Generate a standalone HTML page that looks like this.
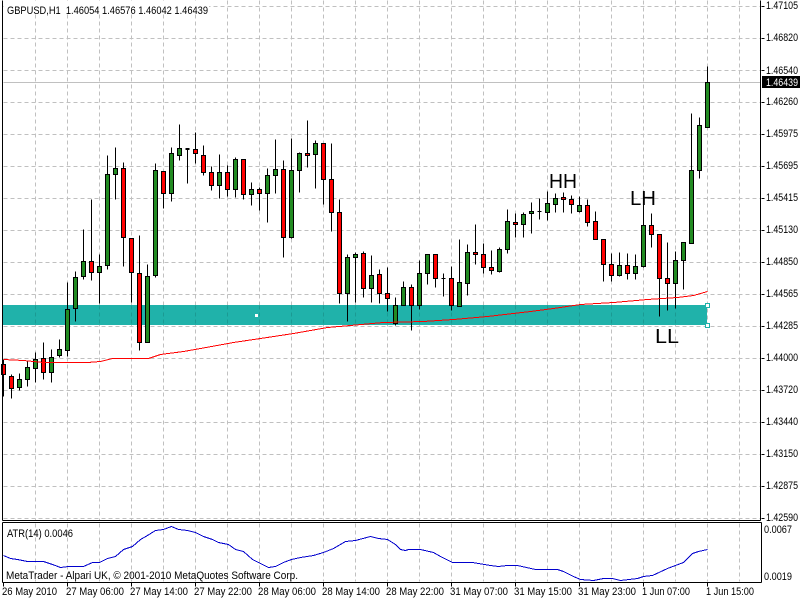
<!DOCTYPE html>
<html>
<head>
<meta charset="utf-8">
<title>GBPUSD,H1</title>
<style>
html,body{margin:0;padding:0;background:#fff;width:800px;height:600px;overflow:hidden}
svg{display:block}
text{font-family:"Liberation Sans",sans-serif;font-size:11px;fill:#000}
.big{font-size:20px}
</style>
</head>
<body>
<svg width="800" height="600" viewBox="0 0 800 600" xmlns="http://www.w3.org/2000/svg">
<rect width="800" height="600" fill="#fff"/>
<g transform="translate(.5 .5)" shape-rendering="crispEdges" fill="none">
<!-- grid -->
<path stroke="#c0c0c0" stroke-dasharray="4 3" d="M3 6H760M3 38H760M3 70H760M3 102H760M3 134H760M3 166H760M3 198H760M3 230H760M3 262H760M3 294H760M3 326H760M3 358H760M3 390H760M3 422H760M3 454H760M3 486H760M3 518H760"/>
<path stroke="#c0c0c0" stroke-dasharray="4 3" d="M35 0V520M67 0V520M99 0V520M131 0V520M163 0V520M195 0V520M227 0V520M259 0V520M291 0V520M323 0V520M355 0V520M387 0V520M419 0V520M451 0V520M483 0V520M515 0V520M547 0V520M579 0V520M611 0V520M643 0V520M675 0V520M707 0V520"/>
<path stroke="#c0c0c0" stroke-dasharray="4 3" d="M739 0V520"/>
<path stroke="#c0c0c0" stroke-dasharray="4 3" d="M35 523V581M67 523V581M99 523V581M131 523V581M163 523V581M195 523V581M227 523V581M259 523V581M291 523V581M323 523V581M355 523V581M387 523V581M419 523V581M451 523V581M483 523V581M515 523V581M547 523V581M579 523V581M611 523V581M643 523V581M675 523V581M707 523V581M739 523V581"/>
</g>
<!-- teal rectangle -->
<rect x="3" y="305" width="704" height="20" fill="#20b2aa"/>
<g transform="translate(.5 .5)" shape-rendering="crispEdges" fill="none">
<path stroke="#1b9a93" stroke-dasharray="4 3" d="M35 305V324M67 305V324M99 305V324M131 305V324M163 305V324M195 305V324M227 305V324M259 305V324M291 305V324M323 305V324M355 305V324M387 305V324M419 305V324M451 305V324M483 305V324M515 305V324M547 305V324M579 305V324M611 305V324M643 305V324M675 305V324"/>
<!-- last price line -->
<path stroke="#c0c0c0" d="M3 82H760"/>
<!-- wicks -->
<path stroke="#000" d="M3 359V396M11 374V398M19 373V390M27 360V386M35 352V382M43 342V379M51 349V382M59 339V357M67 282V356M75 271V321M83 229V279M91 199V280M99 254V303M107 155V269M115 147V199M123 162V266M131 238V302M139 235V350M147 264V342M155 163V277M163 171V208M171 147V201M179 124V160M187 149V183M195 132V163M203 145V175M211 166V190M219 154V198M227 165V196M235 157V197M243 159V199M251 182V205M259 187V210M267 168V222M275 139V193M283 160V257M291 138V238M299 152V192M307 120V167M315 140V188M323 143V204M331 143V231M339 199V303M347 254V321M355 252V302M363 251V297M371 255V302M379 269V303M387 267V311M395 297V325M403 281V305M411 284V330M419 260V309M427 254V284M435 254V287M443 273V296M451 266V310M459 239V306M467 244V295M475 224V264M483 243V273M491 250V274M499 247V272M507 209V253M515 213V237M523 212V237M531 202V233M539 198V219M547 191V220M555 193V212M563 192V212M571 195V213M579 196V212M587 199V226M595 211V239M603 239V281M611 253V281M619 252V276M627 253V279M635 254V279M643 203V267M651 213V247M659 234V316M667 242V310M675 251V308M683 242V289M691 113V243M699 117V178M707 66V127"/>
<!-- dojis -->
<path stroke="#000" d="M185 149h4M185 148h4M441 278h4M537 211h4"/>
<!-- green bodies -->
<path stroke="#000" fill="#228b22" d="M17 379h4V387h-4zM25 367h4V379h-4zM33 359h4V368h-4zM49 357h4V372h-4zM57 349h4V355h-4zM65 309h4V350h-4zM73 277h4V308h-4zM81 261h4V276h-4zM97 266h4V272h-4zM105 174h4V265h-4zM113 168h4V174h-4zM145 276h4V342h-4zM153 170h4V275h-4zM169 153h4V193h-4zM177 148h4V155h-4zM217 172h4V185h-4zM233 159h4V189h-4zM249 189h4V194h-4zM265 175h4V193h-4zM273 169h4V175h-4zM289 170h4V237h-4zM297 153h4V170h-4zM313 143h4V154h-4zM345 257h4V293h-4zM353 254h4V257h-4zM369 275h4V288h-4zM393 305h4V323h-4zM401 287h4V305h-4zM417 273h4V305h-4zM425 254h4V273h-4zM457 282h4V306h-4zM465 252h4V283h-4zM497 249h4V271h-4zM505 221h4V249h-4zM521 214h4V224h-4zM529 211h4V213h-4zM545 203h4V212h-4zM553 198h4V204h-4zM577 205h4V211h-4zM617 265h4V275h-4zM633 266h4V273h-4zM641 225h4V266h-4zM673 260h4V283h-4zM681 242h4V260h-4zM689 170h4V243h-4zM697 125h4V170h-4zM705 82h4V127h-4z"/>
<!-- red bodies -->
<path stroke="#000" fill="#ff0000" d="M1 364h4V374h-4zM9 376h4V388h-4zM41 358h4V372h-4zM89 261h4V272h-4zM121 168h4V237h-4zM129 238h4V272h-4zM137 273h4V342h-4zM161 171h4V193h-4zM193 149h4V153h-4zM201 155h4V172h-4zM209 172h4V185h-4zM225 172h4V189h-4zM241 159h4V194h-4zM257 189h4V193h-4zM281 169h4V237h-4zM305 153h4V155h-4zM321 143h4V179h-4zM329 179h4V212h-4zM337 212h4V293h-4zM361 253h4V288h-4zM377 274h4V293h-4zM385 293h4V298h-4zM409 287h4V305h-4zM433 254h4V278h-4zM449 278h4V305h-4zM473 252h4V254h-4zM481 254h4V267h-4zM489 267h4V270h-4zM513 222h4V224h-4zM561 197h4V199h-4zM569 199h4V204h-4zM585 205h4V222h-4zM593 221h4V239h-4zM601 239h4V264h-4zM609 264h4V275h-4zM625 265h4V273h-4zM649 225h4V234h-4zM657 234h4V278h-4zM665 278h4V283h-4z"/>
<!-- moving average -->
<polyline stroke="#ff0000" points="3,359 23,360 43,362 87,362 100,361 112,358 148,358 160,354 183,351 200,348 233,342 260,338 293,333 327,327 350,325 383,322 423,321 453,319 487,316 530,311 553,308 580,304 613,302 647,299 677,297 693,295 707,291"/>
<!-- ATR -->
<polyline stroke="#0000cd" points="3,555 10,558 17,559 27,561 43,561 52,564 60,567 68,566 83,566 92,562 99,562 107,558 115,556 123,549 132,546 140,539 147,535 155,530 163,529 171,526 178,529 187,530 195,532 203,536 212,539 218,542 228,544 235,549 243,551 252,559 260,563 268,567 275,566 283,562 291,559 300,557 313,555 323,552 333,548 345,541 355,540 370,536 378,538 387,539 395,544 400,549 405,550 408,549 420,549 433,552 440,556 452,562 472,562 490,565 498,566 507,565 517,565 535,569 557,569 563,571 573,576 580,579 593,580 603,578 612,578 620,580 637,578 643,576 652,575 667,568 683,562 692,553 698,551 707,549"/>
<!-- rectangle handles -->
<rect x="705" y="303" width="4" height="4" fill="#fff" stroke="#20b2aa"/>
<rect x="705" y="323" width="4" height="4" fill="#fff" stroke="#20b2aa"/>
<!-- frame -->
<path stroke="#000" d="M2 0V520M760 0V520M2 520H760M2 522H761M2 522V582M761 522V582M2 582H761"/>
<!-- axis ticks -->
<path stroke="#000" d="M761 6h3M761 38h3M761 70h3M761 102h3M761 134h3M761 166h3M761 198h3M761 230h3M761 262h3M761 294h3M761 326h3M761 358h3M761 390h3M761 422h3M761 454h3M761 486h3M761 518h3M3 582v4M67 582v4M131 582v4M195 582v4M259 582v4M323 582v4M387 582v4M451 582v4M515 582v4M579 582v4M643 582v4M707 582v4"/>
</g>
<rect x="255" y="314" width="3" height="3" fill="#fff"/>
<rect x="4" y="1" width="205" height="13" fill="#fff"/>
<!-- header text -->
<text x="7" y="14" textLength="201" lengthAdjust="spacingAndGlyphs" xml:space="preserve">GBPUSD,H1  1.46054 1.46576 1.46042 1.46439</text>
<!-- annotations -->
<text class="big" x="549" y="188" textLength="28" lengthAdjust="spacingAndGlyphs">HH</text>
<text class="big" x="630" y="205" textLength="26" lengthAdjust="spacingAndGlyphs">LH</text>
<text class="big" x="655" y="343" textLength="24" lengthAdjust="spacingAndGlyphs">LL</text>
<!-- price scale -->
<g>
<text x="766" y="9" textLength="32" lengthAdjust="spacingAndGlyphs">1.47105</text>
<text x="766" y="41" textLength="32" lengthAdjust="spacingAndGlyphs">1.46820</text>
<text x="766" y="74" textLength="32" lengthAdjust="spacingAndGlyphs">1.46540</text>
<text x="766" y="105" textLength="32" lengthAdjust="spacingAndGlyphs">1.46260</text>
<text x="766" y="137" textLength="32" lengthAdjust="spacingAndGlyphs">1.45975</text>
<text x="766" y="169" textLength="32" lengthAdjust="spacingAndGlyphs">1.45695</text>
<text x="766" y="201" textLength="32" lengthAdjust="spacingAndGlyphs">1.45415</text>
<text x="766" y="233" textLength="32" lengthAdjust="spacingAndGlyphs">1.45130</text>
<text x="766" y="265" textLength="32" lengthAdjust="spacingAndGlyphs">1.44850</text>
<text x="766" y="297" textLength="32" lengthAdjust="spacingAndGlyphs">1.44565</text>
<text x="766" y="329" textLength="32" lengthAdjust="spacingAndGlyphs">1.44285</text>
<text x="766" y="361" textLength="32" lengthAdjust="spacingAndGlyphs">1.44000</text>
<text x="766" y="393" textLength="32" lengthAdjust="spacingAndGlyphs">1.43720</text>
<text x="766" y="425" textLength="32" lengthAdjust="spacingAndGlyphs">1.43440</text>
<text x="766" y="457" textLength="32" lengthAdjust="spacingAndGlyphs">1.43150</text>
<text x="766" y="489" textLength="32" lengthAdjust="spacingAndGlyphs">1.42875</text>
<text x="766" y="521" textLength="32" lengthAdjust="spacingAndGlyphs">1.42590</text>
</g>
<rect x="762" y="76" width="38" height="12" fill="#000"/>
<text x="766" y="86" textLength="32" lengthAdjust="spacingAndGlyphs" style="fill:#fff">1.46439</text>
<!-- ATR labels -->
<text x="7" y="537" textLength="66" lengthAdjust="spacingAndGlyphs">ATR(14) 0.0046</text>
<text x="6" y="579" textLength="292" lengthAdjust="spacingAndGlyphs">MetaTrader - Alpari UK, © 2001-2010 MetaQuotes Software Corp.</text>
<text x="764" y="533" textLength="28" lengthAdjust="spacingAndGlyphs">0.0067</text>
<text x="764" y="580" textLength="28" lengthAdjust="spacingAndGlyphs">0.0019</text>
<!-- time scale -->
<g>
<text x="2" y="595" textLength="55" lengthAdjust="spacingAndGlyphs">26 May 2010</text>
<text x="66" y="595" textLength="58" lengthAdjust="spacingAndGlyphs">27 May 06:00</text>
<text x="130" y="595" textLength="58" lengthAdjust="spacingAndGlyphs">27 May 14:00</text>
<text x="194" y="595" textLength="58" lengthAdjust="spacingAndGlyphs">27 May 22:00</text>
<text x="258" y="595" textLength="58" lengthAdjust="spacingAndGlyphs">28 May 06:00</text>
<text x="322" y="595" textLength="58" lengthAdjust="spacingAndGlyphs">28 May 14:00</text>
<text x="386" y="595" textLength="58" lengthAdjust="spacingAndGlyphs">28 May 22:00</text>
<text x="450" y="595" textLength="58" lengthAdjust="spacingAndGlyphs">31 May 07:00</text>
<text x="514" y="595" textLength="58" lengthAdjust="spacingAndGlyphs">31 May 15:00</text>
<text x="578" y="595" textLength="58" lengthAdjust="spacingAndGlyphs">31 May 23:00</text>
<text x="642" y="595" textLength="48" lengthAdjust="spacingAndGlyphs">1 Jun 07:00</text>
<text x="706" y="595" textLength="48" lengthAdjust="spacingAndGlyphs">1 Jun 15:00</text>
</g>
</svg>
</body>
</html>
